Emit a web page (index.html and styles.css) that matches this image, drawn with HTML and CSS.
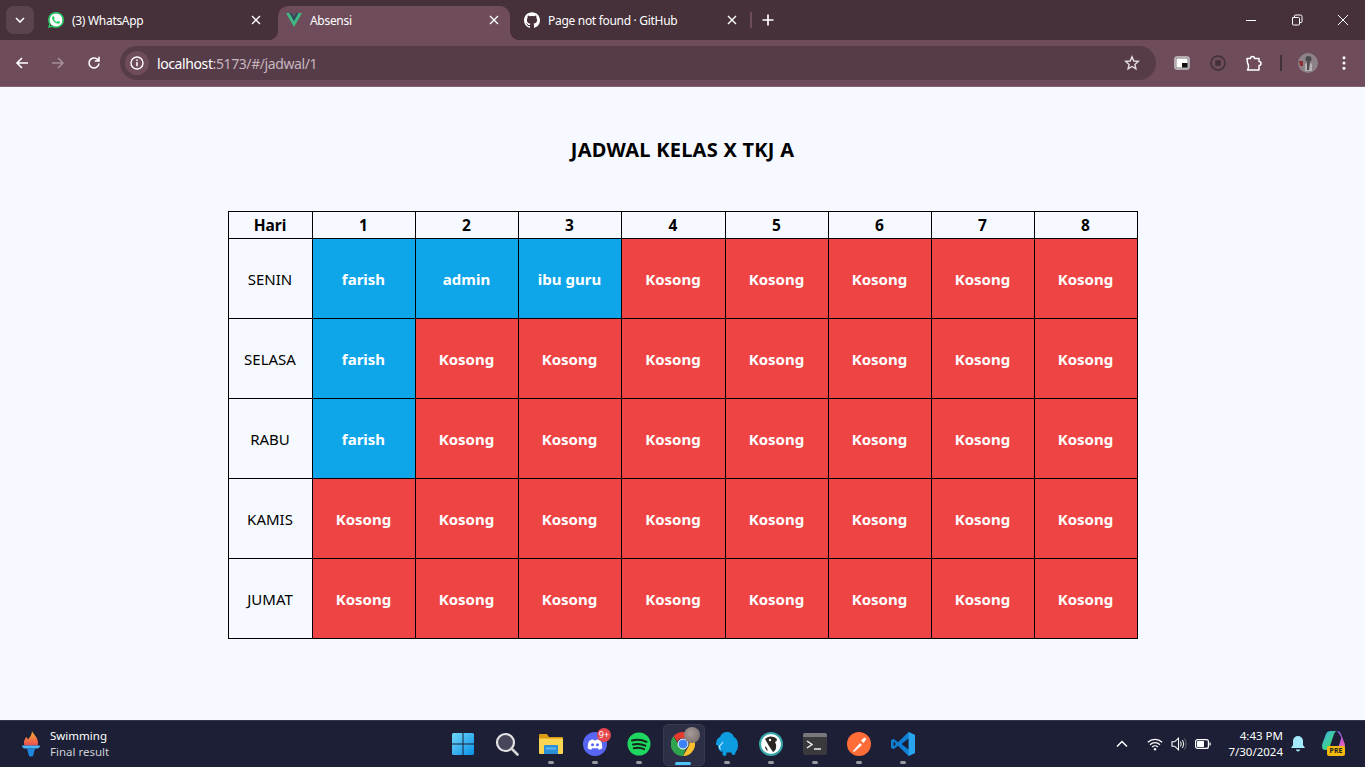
FILE: index.html
```html
<!DOCTYPE html>
<html lang="id">
<head>
<meta charset="utf-8">
<title>Absensi</title>
<link rel="stylesheet" href="styles.css">
</head>
<body>
<div class="screen">
  <header class="browser">
    <div class="tabstrip">
      <button class="tab-search"><svg width="10" height="6" viewBox="0 0 10 6"><path d="M1 1l4 4 4-4" fill="none" stroke="#fff" stroke-width="1.6"/></svg></button>
      <div class="tab tab-first">
        <svg class="fav" viewBox="0 0 24 24"><circle cx="12" cy="12" r="10" fill="#fff"/><path fill="#25d366" d="M17.472 14.382c-.297-.149-1.758-.867-2.03-.967-.273-.099-.471-.148-.67.15-.197.297-.767.966-.94 1.164-.173.199-.347.223-.644.075-.297-.15-1.255-.463-2.39-1.475-.883-.788-1.48-1.761-1.653-2.059-.173-.297-.018-.458.13-.606.134-.133.298-.347.446-.52.149-.174.198-.298.298-.497.099-.198.05-.371-.025-.52-.075-.149-.669-1.612-.916-2.207-.242-.579-.487-.5-.669-.51-.173-.008-.371-.01-.57-.01-.198 0-.52.074-.792.372-.272.297-1.04 1.016-1.04 2.479 0 1.462 1.065 2.875 1.213 3.074.149.198 2.096 3.2 5.077 4.487.709.306 1.262.489 1.694.625.712.227 1.36.195 1.871.118.571-.085 1.758-.719 2.006-1.413.248-.694.248-1.289.173-1.413-.074-.124-.272-.198-.57-.347m-5.421 7.403h-.004a9.87 9.87 0 01-5.031-1.378l-.361-.214-3.741.982.998-3.648-.235-.374a9.86 9.86 0 01-1.51-5.26c.001-5.45 4.436-9.884 9.888-9.884 2.64 0 5.122 1.03 6.988 2.898a9.825 9.825 0 012.893 6.994c-.003 5.45-4.437 9.884-9.885 9.884m8.413-18.297A11.815 11.815 0 0012.05 0C5.495 0 .16 5.335.157 11.892c0 2.096.547 4.142 1.588 5.945L.057 24l6.305-1.654a11.882 11.882 0 005.683 1.448h.005c6.554 0 11.89-5.335 11.893-11.893a11.821 11.821 0 00-3.48-8.413z"/></svg>
        <span class="tab-title">(3) WhatsApp</span>
        <svg class="tab-close" viewBox="0 0 10 10"><path d="M1 1l8 8M9 1l-8 8" stroke="#fff" stroke-width="1.4"/></svg>
      </div>
      <div class="tab tab-active">
        <svg class="fav" viewBox="0 0 24 21"><path fill="#41b883" d="M19 0h5L12 21 0 0h9.2L12 4.8 14.8 0z"/><path fill="#34495e" d="M5 0h4.2L12 4.8 14.8 0H19l-7 12.2z"/></svg>
        <span class="tab-title">Absensi</span>
        <svg class="tab-close" viewBox="0 0 10 10"><path d="M1 1l8 8M9 1l-8 8" stroke="#fff" stroke-width="1.4"/></svg>
      </div>
      <div class="tab tab-last">
        <svg class="fav" viewBox="0 0 24 24"><path fill="#fff" d="M12 .297c-6.63 0-12 5.373-12 12 0 5.303 3.438 9.8 8.205 11.385.6.113.82-.258.82-.577 0-.285-.01-1.04-.015-2.04-3.338.724-4.042-1.61-4.042-1.61C4.422 18.07 3.633 17.7 3.633 17.7c-1.087-.744.084-.729.084-.729 1.205.084 1.838 1.236 1.838 1.236 1.07 1.835 2.809 1.305 3.495.998.108-.776.417-1.305.76-1.605-2.665-.3-5.466-1.332-5.466-5.93 0-1.31.465-2.38 1.235-3.22-.135-.303-.54-1.523.105-3.176 0 0 1.005-.322 3.3 1.23.96-.267 1.98-.399 3-.405 1.02.006 2.04.138 3 .405 2.28-1.552 3.285-1.23 3.285-1.23.645 1.653.24 2.873.12 3.176.765.84 1.23 1.91 1.23 3.22 0 4.61-2.805 5.625-5.475 5.92.42.36.81 1.096.81 2.22 0 1.606-.015 2.896-.015 3.286 0 .315.21.69.825.57C20.565 22.092 24 17.592 24 12.297c0-6.627-5.373-12-12-12"/></svg>
        <span class="tab-title">Page not found · GitHub</span>
        <svg class="tab-close" viewBox="0 0 10 10"><path d="M1 1l8 8M9 1l-8 8" stroke="#fff" stroke-width="1.4"/></svg>
      </div>
      <span class="tab-sep"></span>
      <svg class="new-tab" viewBox="0 0 12 12"><path d="M6 .5v11M.5 6h11" stroke="#fff" stroke-width="1.7"/></svg>
      <div class="win-controls">
        <svg viewBox="0 0 46 12"><path d="M19 6.500h10" stroke="#fff"/></svg>
        <svg viewBox="0 0 46 12"><path d="M19.500 3.500h6a1 1 0 0 1 1 1V10a1 1 0 0 1-1 1h-5a1 1 0 0 1-1-1zM21.500 3.500V2a1 1 0 0 1 1-1h5a1.500 1.500 0 0 1 1.500 1.500v5a1 1 0 0 1-1 1h-1.500" fill="none" stroke="#fff"/></svg>
        <svg viewBox="0 0 46 12"><path d="M19 1l10 10M29 1L19 11" stroke="#fff"/></svg>
      </div>
    </div>
    <div class="toolbar">
      <svg class="tool" viewBox="0 0 16 16"><path d="M14 8H3M8 3L3 8l5 5" fill="none" stroke="#fff" stroke-width="1.6"/></svg>
      <svg class="tool" viewBox="0 0 16 16"><path d="M2 8h11M8 3l5 5-5 5" fill="none" stroke="#a48e98" stroke-width="1.6"/></svg>
      <svg class="tool" viewBox="0 0 16 16"><path d="M13 8.500A5 5 0 1 1 11.500 4.400L13 6M13 1.800V6H8.800" fill="none" stroke="#fff" stroke-width="1.6"/></svg>
      <div class="omnibox">
        <span class="site-info"><svg width="14" height="14" viewBox="0 0 14 14"><circle cx="7" cy="7" r="6" fill="none" stroke="#fff" stroke-width="1.400"/><path d="M7 6v4.200M7 3.500v1.400" stroke="#fff" stroke-width="1.500"/></svg></span>
        <span class="url"><span class="url-host">localhost</span>:5173/#/jadwal/1</span>
        <svg class="star" viewBox="0 0 16 16"><path d="M8 1.800l1.800 4.200 4.500.4-3.400 3 1 4.400L8 11.500l-3.900 2.300 1-4.400-3.400-3 4.500-.4z" fill="none" stroke="#e8dfe3" stroke-width="1.400"/></svg>
      </div>
      <div class="tool-right">
        <svg class="tool" viewBox="0 0 16 16"><rect x=".8" y="1.800" width="14.400" height="12.400" rx="1.500" fill="#fff" stroke="#c8bcc1"/><rect x="2" y="3" width="12" height="10" fill="#fff" stroke="#222" stroke-width=".6"/><rect x="8" y="8" width="5.500" height="4.500" fill="#111"/></svg>
        <svg class="tool" viewBox="0 0 16 16"><circle cx="8" cy="8" r="7" fill="none" stroke="#3f3039" stroke-width="1.500"/><rect x="5.200" y="5.200" width="5.600" height="5.600" rx="1" fill="#3f3039"/></svg>
        <svg class="tool" viewBox="0 0 16 16"><path d="M1 3.500h3.500a2 2 0 0 1 4 0h4.500v3a2 2 0 0 1 0 4v4.500H1.500q1-1.500 1-3.500t-1-3.500z" fill="none" stroke="#fff" stroke-width="1.500" stroke-linejoin="round"/></svg>
        <span class="tool-sep"></span>
        <svg class="avatar" viewBox="0 0 20 20"><circle cx="10" cy="10" r="10" fill="#8c8288"/><circle cx="10.500" cy="6" r="3" fill="#4a4a50"/><path d="M7 18V11q3-2.500 7 0v7z" fill="#b5b1b4"/><path d="M1 8h4v5H2z" fill="#8c2f35"/><path d="M9 9h3l-1 8H9z" fill="#50484d"/></svg>
        <svg class="tool tool-menu" viewBox="0 0 16 16"><circle cx="8" cy="2.800" r="1.500" fill="#fff"/><circle cx="8" cy="8" r="1.500" fill="#fff"/><circle cx="8" cy="13.200" r="1.500" fill="#fff"/></svg>
      </div>
    </div>
  </header>

  <main class="page">
    <h1 class="title">JADWAL KELAS X TKJ A</h1>
    <table class="schedule">
      <colgroup><col class="col-day"><col class="col-slot"><col class="col-slot"><col class="col-slot"><col class="col-wide"><col class="col-slot"><col class="col-slot"><col class="col-slot"><col class="col-slot"></colgroup>
      <thead>
        <tr><th>Hari</th><th>1</th><th>2</th><th>3</th><th>4</th><th>5</th><th>6</th><th>7</th><th>8</th></tr>
      </thead>
      <tbody>
        <tr><td class="day">SENIN</td><td class="busy">farish</td><td class="busy">admin</td><td class="busy">ibu guru</td><td class="free">Kosong</td><td class="free">Kosong</td><td class="free">Kosong</td><td class="free">Kosong</td><td class="free">Kosong</td></tr>
        <tr><td class="day">SELASA</td><td class="busy">farish</td><td class="free">Kosong</td><td class="free">Kosong</td><td class="free">Kosong</td><td class="free">Kosong</td><td class="free">Kosong</td><td class="free">Kosong</td><td class="free">Kosong</td></tr>
        <tr><td class="day">RABU</td><td class="busy">farish</td><td class="free">Kosong</td><td class="free">Kosong</td><td class="free">Kosong</td><td class="free">Kosong</td><td class="free">Kosong</td><td class="free">Kosong</td><td class="free">Kosong</td></tr>
        <tr><td class="day">KAMIS</td><td class="free">Kosong</td><td class="free">Kosong</td><td class="free">Kosong</td><td class="free">Kosong</td><td class="free">Kosong</td><td class="free">Kosong</td><td class="free">Kosong</td><td class="free">Kosong</td></tr>
        <tr><td class="day">JUMAT</td><td class="free">Kosong</td><td class="free">Kosong</td><td class="free">Kosong</td><td class="free">Kosong</td><td class="free">Kosong</td><td class="free">Kosong</td><td class="free">Kosong</td><td class="free">Kosong</td></tr>
      </tbody>
    </table>
  </main>

  <footer class="taskbar">
    <div class="widget">
      <svg class="torch" viewBox="0 0 18 26">
        <defs><linearGradient id="fl" x1="0" y1="0" x2="0" y2="1"><stop offset="0" stop-color="#f9b233"/><stop offset="1" stop-color="#ee4b52"/></linearGradient></defs>
        <path d="M10 0c1 3 6 6 6 12 0 1-.2 2-.5 2.500h-13C2 13.500 2 12 2 11c0-2 1.500-3 2-5 1 .5 1.500 1.500 2 2.500C8 6 10 3.500 10 0z" fill="url(#fl)"/>
        <path d="M0 14.500h18c0 1.500-1 3-3 3H3c-2 0-3-1.500-3-3z" fill="#4db4f7"/>
        <path d="M5 17.500h8l-2 7.500q-2 1-4 0z" fill="#1f86e0"/>
      </svg>
      <div class="widget-text"><span class="widget-top">Swimming</span><span class="widget-sub">Final result</span></div>
    </div>
    <div class="task-icons">
      <div class="task">
        <svg viewBox="0 0 24 24"><defs><linearGradient id="win" x1="0" y1="0" x2="1" y2="1"><stop offset="0" stop-color="#6fd8f7"/><stop offset="1" stop-color="#0a8fe8"/></linearGradient></defs><path d="M1 2.500A1.500 1.500 0 0 1 2.500 1h9v10.500H1zM12.500 1h9A1.500 1.500 0 0 1 23 2.500v9H12.500zM1 12.500h10.500V23h-9A1.500 1.500 0 0 1 1 21.500zM12.500 12.500H23v9a1.500 1.500 0 0 1-1.500 1.500h-9z" fill="url(#win)"/></svg>
      </div>
      <div class="task">
        <svg viewBox="0 0 24 24"><circle cx="10.500" cy="10.500" r="8.500" fill="#45465a" stroke="#e4e4e6" stroke-width="2.200"/><path d="M16.500 16.500l6 6" stroke="#d5d5d8" stroke-width="2.600" stroke-linecap="round"/></svg>
      </div>
      <div class="task has-dot">
        <svg viewBox="0 0 24 24"><path d="M0 3a1 1 0 0 1 1-1h7l2 3h13a1 1 0 0 1 1 1v4H0z" fill="#d99a14"/><path d="M0 6.500h24V21a1 1 0 0 1-1 1H1a1 1 0 0 1-1-1z" fill="#fbd552"/><path d="M5 14a1 1 0 0 1 1-1h12a1 1 0 0 1 1 1v8H5z" fill="#2a8fd8"/><path d="M7 15.500h10v2H7z" fill="#5cb7ef"/></svg>
      </div>
      <div class="task has-dot">
        <svg viewBox="0 0 24 24"><circle cx="12" cy="12" r="12" fill="#5865f2"/><path d="M6 9q2.500-1.800 4-1.800l.6 1h2.800l.6-1q1.500 0 4 1.800 1.500 3 1.300 7.300-1.800 1.300-3.500 1.500l-.9-1.500H9.100L8.200 17.800q-1.700-.2-3.500-1.500Q4.500 12 6 9z" fill="#fff"/><circle cx="9.500" cy="12.800" r="1.500" fill="#5865f2"/><circle cx="14.500" cy="12.800" r="1.500" fill="#5865f2"/></svg>
        <span class="badge">9+</span>
      </div>
      <div class="task has-dot">
        <svg viewBox="0 0 24 24"><circle cx="12" cy="12" r="11.500" fill="#1ed760"/><path d="M5 8.500q7.500-2 14.500 1.300M6 12.500q6.500-1.600 12.300 1.200M6.800 16.200q5.500-1.300 10.200 1" fill="none" stroke="#14251a" stroke-width="2" stroke-linecap="round"/></svg>
      </div>
      <div class="task task-active">
        <svg viewBox="0 0 24 24"><path d="M12 0a12 12 0 0 1 10.400 6H12a6 6 0 0 0-5.600 3.800L2.500 4.300A12 12 0 0 1 12 0z" fill="#e33b2e"/><path d="M22.400 6A12 12 0 0 1 12 24l5.200-9a6 6 0 0 0-.8-7.800z" fill="#fbc02d"/><path d="M2.500 4.300l5 8.700a6 6 0 0 0 7.400 3.300L12 24A12 12 0 0 1 2.500 4.300z" fill="#2fa44f"/><circle cx="12" cy="12" r="5" fill="#3b82f6" stroke="#fff"/></svg>
        <span class="task-avatar"></span>
        <span class="task-bar"></span>
      </div>
      <div class="task has-dot">
        <svg viewBox="0 0 24 24"><path d="M1 13Q1 6 5 5q2-5 7-5 5 0 7 5 4 2 4 8 0 5-2.500 7v1q0 2-2 2t-2-2v-.5h-5V22q0 2-2 2t-2-2v-3q-1 1-2 .5-2.500-2-3-6.500z" fill="#0e9ce0"/><path d="M8 10q-2 3-3.500 4 0 2 1 3.500" fill="none" stroke="#bfe9fb" stroke-width="1.200"/></svg>
      </div>
      <div class="task has-dot">
        <svg viewBox="0 0 24 24"><circle cx="12" cy="12" r="11" fill="#fff" stroke="#36a6ab" stroke-width="2"/><path d="M6 7q3-3 6-2.500 5 .5 6 3 0 1.500-2 2.500 2 3 1 6.500-1 2.500-3 3.500-2-3-4-6-2-3.500-4-7z" fill="#2b2522"/><circle cx="11" cy="8" r="1.200" fill="#fff"/><path d="M6 14q2 1 3 5-3-1-3-5z" fill="#3a322e"/></svg>
      </div>
      <div class="task has-dot">
        <svg viewBox="0 0 24 24"><rect y="1" width="24" height="22" rx="2" fill="#3a3a3c"/><path d="M0 3a2 2 0 0 1 2-2h20a2 2 0 0 1 2 2v2H0z" fill="#78787a"/><path d="M4 9l5 3.500L4 16" fill="none" stroke="#eee" stroke-width="1.500"/><path d="M11 17h7" stroke="#eee" stroke-width="1.500"/></svg>
      </div>
      <div class="task has-dot">
        <svg viewBox="0 0 24 24"><circle cx="12" cy="12" r="12" fill="#ff6c37"/><path d="M6 19l7-8 2 2-8 7zM14 8.500l3.500-3 2 1.500-3 4z" fill="#fff"/><path d="M13.500 9.500l2.500 2.500" stroke="#ff6c37"/></svg>
      </div>
      <div class="task has-dot">
        <svg viewBox="0 0 24 24"><path d="M17.500 0L24 3v18l-6.500 3L7 13.800l-4.500 3.400L0 15.800V8.200l2.500-1.400L7 10.200z" fill="#0e7fd2"/><path d="M17.500 0L24 3v18l-6.500 3z" fill="#2aa4ef"/><path d="M17.500 6.500L10.500 12l7 5.500z" fill="#1c1f35"/><path d="M2.500 9.500L5 12l-2.500 2.500z" fill="#1c1f35"/></svg>
      </div>
    </div>
    <div class="tray">
      <svg class="tray-ic chev" viewBox="0 0 12 8"><path d="M1 6.500l5-5 5 5" fill="none" stroke="#fff" stroke-width="1.500"/></svg>
      <svg class="tray-ic wifi" viewBox="0 0 16 13"><path d="M.8 4.300a10.500 10.500 0 0 1 14.400 0M3 6.700a7.300 7.300 0 0 1 10 0M5.200 9a4 4 0 0 1 5.600 0" fill="none" stroke="#fff" stroke-width="1.200"/><circle cx="8" cy="11.300" r="1.200" fill="#fff"/></svg>
      <svg class="tray-ic vol" viewBox="0 0 16 14"><path d="M1 4.800h2.500L7.500 1.200v11.600L3.500 9.200H1z" fill="none" stroke="#fff" stroke-width="1.100"/><path d="M9.500 4.500q1.500 2.500 0 5M11.500 3q2.500 4 0 8" fill="none" stroke="#fff"/><path d="M13.500 1.500q3.300 5.500 0 11" fill="none" stroke="#666"/></svg>
      <svg class="tray-ic batt" viewBox="0 0 16 10"><rect x=".6" y=".6" width="12.800" height="8.800" rx="2" fill="none" stroke="#fff" stroke-width="1.200"/><rect x="2" y="2" width="7" height="6" rx=".8" fill="#fff"/><path d="M14.500 3.200h.4a.8.8 0 0 1 .8.800v2a.8.8 0 0 1-.8.800h-.4z" fill="#fff"/></svg>
      <div class="clock"><span>4:43 PM</span><span>7/30/2024</span></div>
      <svg class="tray-ic bell" viewBox="0 0 14 16"><path d="M7 0a5 5 0 0 1 5 5v4l2 3H0l2-3V5a5 5 0 0 1 5-5z" fill="#a4eafc"/><path d="M4.800 13.500h4.400q-.6 2-2.200 2t-2.200-2z" fill="#a4eafc"/></svg>
      <div class="copilot">
        <svg viewBox="0 0 24 20"><defs><linearGradient id="c1" x1="0" y1="0" x2="1" y2="1"><stop offset="0" stop-color="#3fb4e8"/><stop offset=".6" stop-color="#3fcf8e"/><stop offset="1" stop-color="#f3d33a"/></linearGradient><linearGradient id="c2" x1="0" y1="0" x2="1" y2="1"><stop offset="0" stop-color="#5a6df0"/><stop offset=".6" stop-color="#c85ad8"/><stop offset="1" stop-color="#f0709a"/></linearGradient></defs><path d="M9 0h6q-2 0-3 3L8 15q-1 4-5 4-3 0-3-4 0-2 1-4l3-8q1-3 5-3z" fill="url(#c1)"/><path d="M15 0q3 0 4 3l3 8q1 2 1 3 0 4-3 4h-8q4 0 5-4l2-6q.5-2-.5-3-1-2-3.500-5z" fill="url(#c2)"/></svg>
        <span class="pre">PRE</span>
      </div>
    </div>
  </footer>
</div>
</body>
</html>
```

FILE: styles.css
```css
* { box-sizing: border-box; }
html, body { margin: 0; padding: 0; }
body { font-family: "Noto Sans", "Open Sans", "Liberation Sans", sans-serif; }
svg { display: block; flex: none; }

.screen { width: 1365px; height: 767px; display: flex; flex-direction: column; overflow: hidden; background: #f6f9ff; }

/* browser chrome */
.browser { flex: none; height: 87px; background: #6f4c5b; border-bottom: 1px solid #fff2; }
.tabstrip { height: 40px; background: #46303a; display: flex; align-items: flex-start; padding: 6px 0 0 6px; }
.tab-search { width: 28px; height: 28px; border: 0; padding: 0; border-radius: 8px; background: #5c4350; display: flex; align-items: center; justify-content: center; }
.tab { position: relative; height: 34px; padding: 0 14px 6px; display: flex; align-items: center; color: #fff; font-size: 12px; }
.tab-first { width: 244px; }
.tab-active { width: 232px; padding: 0 8px 6px; background: #6f4c5b; border-radius: 10px 10px 0 0; }
.tab-active::before, .tab-active::after { content: ""; position: absolute; bottom: 0; width: 10px; height: 10px; }
.tab-active::before { left: -10px; background: radial-gradient(circle at 0 0, #46303a 10px, #6f4c5b 10.5px); }
.tab-active::after { right: -10px; background: radial-gradient(circle at 100% 0, #46303a 10px, #6f4c5b 10.5px); }
.tab-last { width: 240px; padding-right: 10px; }
.fav { width: 16px; height: 16px; margin-right: 8px; }
.tab-active .fav { height: 14px; }
.tab-title { flex: 1; white-space: nowrap; letter-spacing: -0.3px; }
.tab-close { width: 10px; height: 10px; margin-right: 3px; }
.tab-sep { width: 2px; height: 16px; margin: 6px 0 0 0; background: #6f4c5b; }
.new-tab { width: 12px; height: 12px; margin: 8px 0 0 10px; }
.win-controls { margin-left: auto; display: flex; align-items: center; height: 28px; }
.win-controls svg { width: 46px; height: 12px; }

.toolbar { height: 46px; display: flex; align-items: center; padding-left: 4px; }
.tool { width: 16px; height: 16px; margin: 0 10px; }
.omnibox { flex: none; width: 1036px; height: 34px; margin-left: 8px; background: #563c49; border-radius: 17px; display: flex; align-items: center; padding: 0 16px 0 5px; }
.site-info { width: 24px; height: 24px; border-radius: 50%; background: #6f4c5b; display: flex; align-items: center; justify-content: center; margin-right: 8px; }
.url { flex: 1; color: #c8b6be; font-size: 14px; letter-spacing: -0.4px; }
.url-host { color: #fff; }
.star { width: 16px; height: 16px; }
.tool-right { display: flex; align-items: center; margin-left: 8px; }
.tool-sep { width: 2px; height: 16px; margin: 0 8px; background: #3f3039; }
.avatar { width: 20px; height: 20px; margin: 0 8px; }
.tool-menu { margin-left: 10px; }

/* page */
.page { flex: 1; display: flex; flex-direction: column; align-items: center; background: #f6f9ff; color: #000; }
.title { margin: 49px 0 0; font-size: 20px; line-height: 27px; font-weight: 700; letter-spacing: 0.25px; }
.schedule { margin-top: 48px; width: 910px; table-layout: fixed; border-collapse: collapse; }
.col-day { width: 84px; }
.col-slot { width: 103px; }
.col-wide { width: 104px; }
.schedule th, .schedule td { border: 1px solid #000; padding: 0; text-align: center; vertical-align: middle; }
.schedule th { height: 27px; font-weight: 700; line-height: 20px; font-size: 15.500px; }
.schedule td { height: 80px; font-weight: 700; color: #fff; font-size: 15px; }
.schedule td.day { font-weight: 400; color: #000; font-size: 15px; background: transparent; }
.schedule .busy { background: #0ea5e9; }
.schedule .free { background: #ef4444; }

/* taskbar */
.taskbar { flex: none; height: 47px; padding-left: 1px; background: #1c1f35; border-top: 1px solid #34364a; display: grid; grid-template-columns: 1fr auto 1fr; align-items: center; color: #fff; font-size: 12px; }
.widget { display: flex; align-items: center; padding-left: 21px; }
.torch { width: 18px; height: 26px; margin-right: 10px; }
.widget-text { display: flex; flex-direction: column; line-height: 16px; }
.widget-top { color: #fff; font-size: 11.500px; }
.widget-sub { color: #cfcfd6; font-size: 11.500px; }
.task-icons { display: flex; }
.task { position: relative; width: 44px; height: 46px; display: flex; align-items: center; justify-content: center; }
.task svg { width: 24px; height: 24px; }
.has-dot::after { content: ""; position: absolute; left: 19px; bottom: 3px; width: 6px; height: 3px; border-radius: 2px; background: #9a9aa2; }
.badge { position: absolute; left: 24px; top: 7px; width: 14px; height: 14px; border-radius: 50%; background: #e5484d; font-size: 9px; line-height: 14px; text-align: center; color: #fff; }
.task-active::before { content: ""; position: absolute; left: 2px; top: 3px; width: 40px; height: 40px; border-radius: 5px; background: #2c2f45; border: 1px solid #383b50; }
.task-active svg { position: relative; }
.task-avatar { position: absolute; left: 23px; top: 6px; width: 16px; height: 16px; border-radius: 50%; background: radial-gradient(circle at 40% 40%, #a79b98, #6e6462); }
.task-bar { position: absolute; left: 14px; bottom: 2px; width: 16px; height: 3px; border-radius: 2px; background: #4fc3f7; }
.tray { display: flex; align-items: center; justify-content: flex-end; padding-right: 19px; }
.tray-ic { flex: none; }
.chev { width: 12px; height: 8px; margin-right: 19px; }
.wifi { width: 16px; height: 13px; margin-right: 8px; }
.vol { width: 16px; height: 14px; margin-right: 8px; }
.batt { width: 16px; height: 10px; margin-right: 17px; }
.clock { display: flex; flex-direction: column; align-items: flex-end; line-height: 16px; font-size: 11.500px; margin-right: 8px; }
.bell { width: 14px; height: 16px; margin-right: 17px; }
.copilot { position: relative; width: 24px; height: 26px; }
.copilot svg { width: 24px; height: 20px; }
.pre { position: absolute; left: 5px; top: 15px; width: 18px; height: 10px; border-radius: 2px; background: #f2b90f; color: #222; font-size: 7px; font-weight: 700; line-height: 10px; text-align: center; }
```
